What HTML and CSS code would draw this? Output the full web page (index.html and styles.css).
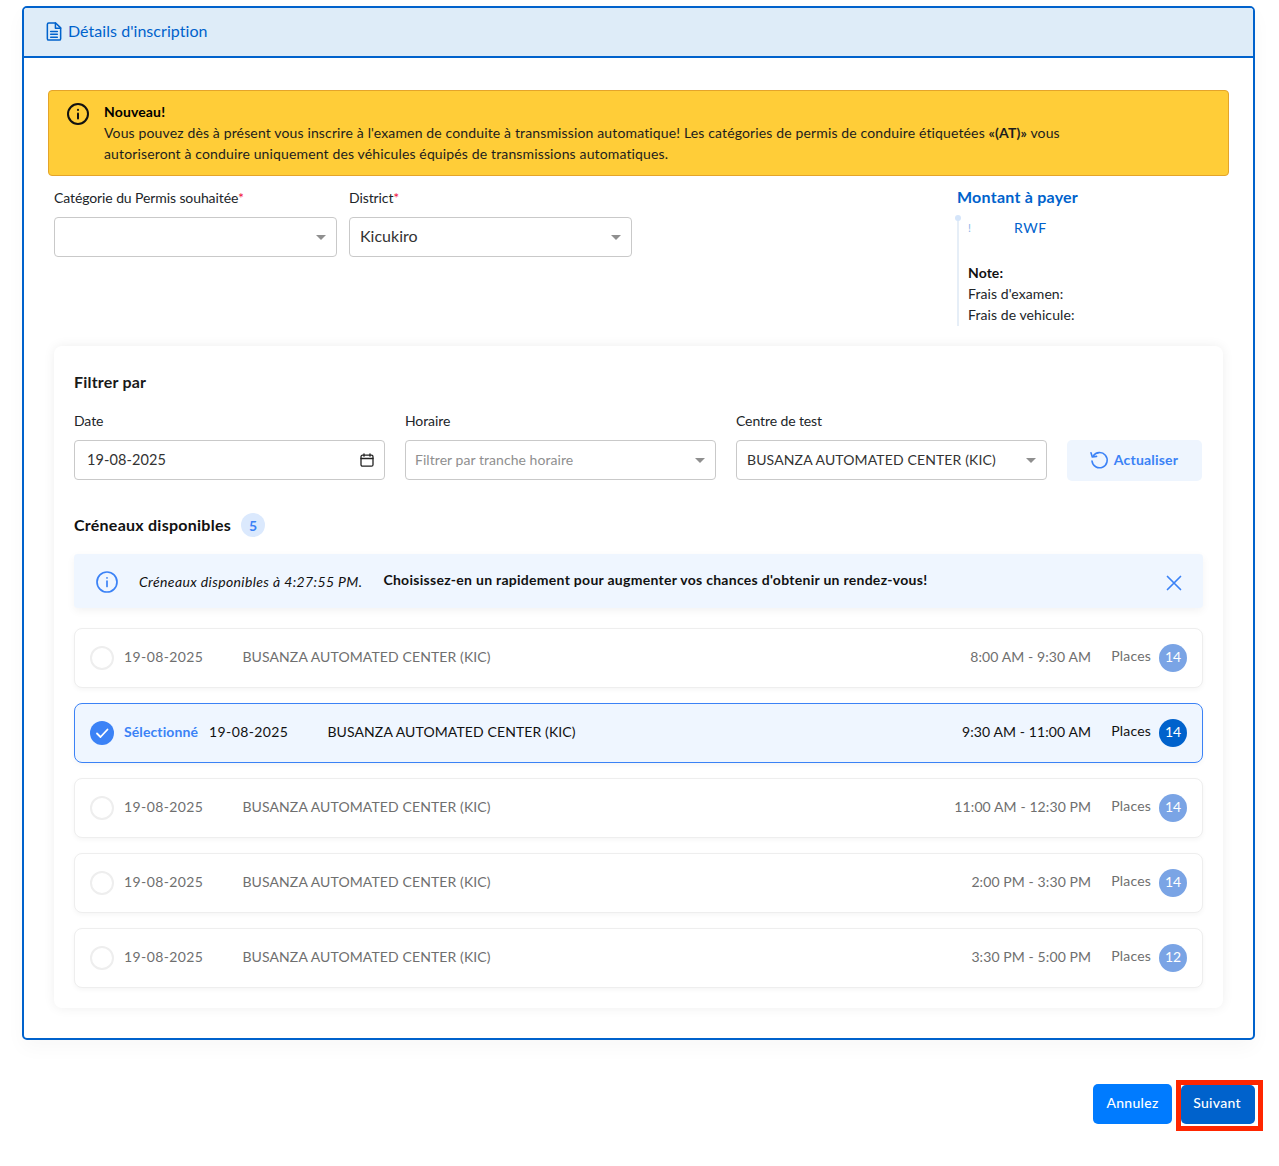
FILE: index.html
```html
<!DOCTYPE html>
<html lang="fr">
<head>
<meta charset="utf-8">
<title>Détails d'inscription</title>
<link rel="stylesheet" href="styles.css">
</head>
<body>
<div class="page">
  <section class="panel">
    <header class="panel-head">
      <svg class="doc-icon" viewBox="0 0 16 20" fill="none" stroke="currentColor" stroke-width="1.6" stroke-linejoin="round" stroke-linecap="round"><path d="M2.5 1h7.2L15 6.2v11.3a1.5 1.5 0 0 1-1.5 1.5h-11A1.5 1.5 0 0 1 1 17.500v-15A1.500 1.500 0 0 1 2.500 1z"/><path d="M9.500 1v5.500H15"/><path d="M4.500 10h7M4.500 13h7M4.500 16h7"/></svg>
      <span class="head-title">Détails d'inscription</span>
    </header>
    <div class="panel-body">
      <div class="notice">
        <svg class="notice-icon" viewBox="0 0 22 22" fill="none" stroke="#111" stroke-width="2" stroke-linecap="round"><circle cx="11" cy="11" r="10"/><path d="M11 10.500v5"/><path d="M11 6.800v.2"/></svg>
        <div class="notice-text">
          <strong>Nouveau!</strong><br>
          Vous pouvez dès à présent vous inscrire à l'examen de conduite à transmission automatique! Les catégories de permis de conduire étiquetées <b>«(AT)»</b> vous<br>autoriseront à conduire uniquement des véhicules équipés de transmissions automatiques.
        </div>
      </div>
      <div class="top-form">
        <div class="field cat-field">
          <label class="label">Catégorie du Permis souhaitée<span class="req">*</span></label>
          <div class="select tall"><span class="caret"></span></div>
        </div>
        <div class="field cat-field">
          <label class="label">District<span class="req">*</span></label>
          <div class="select tall"><span class="value-lg">Kicukiro</span><span class="caret"></span></div>
        </div>
        <aside class="amount">
          <h3 class="amount-title">Montant à payer</h3>
          <div class="timeline">
            <span class="dot"></span>
            <div class="amount-line"><span class="bang">!</span><span class="rwf">RWF</span></div>
            <div class="note"><strong>Note:</strong><br>Frais d'examen:<br>Frais de vehicule:</div>
          </div>
        </aside>
      </div>
      <div class="filter-card">
        <h4 class="filter-title">Filtrer par</h4>
        <div class="filter-row">
          <div class="field">
            <label class="label">Date</label>
            <div class="select"><span class="value">19-08-2025</span>
              <svg class="cal" viewBox="0 0 14 14" fill="none" stroke="#222" stroke-width="1.300" stroke-linecap="round"><rect x="1" y="2.200" width="12" height="11" rx="1.500"/><path d="M1 5.500h12M4 .8v2.400M10 .8v2.400"/></svg>
            </div>
          </div>
          <div class="field">
            <label class="label">Horaire</label>
            <div class="select"><span class="placeholder">Filtrer par tranche horaire</span><span class="caret"></span></div>
          </div>
          <div class="field">
            <label class="label">Centre de test</label>
            <div class="select"><span class="value small">BUSANZA AUTOMATED CENTER (KIC)</span><span class="caret"></span></div>
          </div>
          <button class="refresh" type="button">
            <svg viewBox="0 0 20 20" fill="none" stroke="currentColor" stroke-width="1.600" stroke-linecap="round" stroke-linejoin="round"><path d="M4.200 6A7.600 7.600 0 1 1 3 11"/><path d="M2 2.800 3.300 7l4.300-.6"/></svg>
            Actualiser
          </button>
        </div>
        <div class="slots-head">
          <h4 class="slots-title">Créneaux disponibles</h4>
          <span class="count">5</span>
        </div>
        <div class="info-bar">
          <svg class="info-icon" viewBox="0 0 22 22" fill="none" stroke="currentColor" stroke-width="1.700" stroke-linecap="round"><circle cx="11" cy="11" r="10"/><path d="M11 10v5.500"/><path d="M11 6.800v.2"/></svg>
          <em class="info-time">Créneaux disponibles à 4:27:55 PM.</em>
          <strong class="info-msg">Choisissez-en un rapidement pour augmenter vos chances d'obtenir un rendez-vous!</strong>
          <svg class="close" viewBox="0 0 16 16" fill="none" stroke="currentColor" stroke-width="1.700" stroke-linecap="round"><path d="M1.500 1.500l13 13M14.500 1.500l-13 13"/></svg>
        </div>
        <div class="slots">
          <div class="slot">
            <span class="radio"></span>
            <span class="date">19-08-2025</span>
            <span class="center">BUSANZA AUTOMATED CENTER (KIC)</span>
            <span class="time">8:00 AM - 9:30 AM</span>
            <span class="places">Places</span>
            <span class="seats">14</span>
          </div>
          <div class="slot selected">
            <span class="radio"><svg viewBox="0 0 24 24" fill="none" stroke="#fff" stroke-width="1.800" stroke-linecap="round" stroke-linejoin="round"><path d="M7 12.500l3.500 3.500L17.500 8.500"/></svg></span>
            <span class="picked">Sélectionné</span>
            <span class="date">19-08-2025</span>
            <span class="center">BUSANZA AUTOMATED CENTER (KIC)</span>
            <span class="time">9:30 AM - 11:00 AM</span>
            <span class="places">Places</span>
            <span class="seats">14</span>
          </div>
          <div class="slot">
            <span class="radio"></span>
            <span class="date">19-08-2025</span>
            <span class="center">BUSANZA AUTOMATED CENTER (KIC)</span>
            <span class="time">11:00 AM - 12:30 PM</span>
            <span class="places">Places</span>
            <span class="seats">14</span>
          </div>
          <div class="slot">
            <span class="radio"></span>
            <span class="date">19-08-2025</span>
            <span class="center">BUSANZA AUTOMATED CENTER (KIC)</span>
            <span class="time">2:00 PM - 3:30 PM</span>
            <span class="places">Places</span>
            <span class="seats">14</span>
          </div>
          <div class="slot">
            <span class="radio"></span>
            <span class="date">19-08-2025</span>
            <span class="center">BUSANZA AUTOMATED CENTER (KIC)</span>
            <span class="time">3:30 PM - 5:00 PM</span>
            <span class="places">Places</span>
            <span class="seats">12</span>
          </div>
        </div>
      </div>
    </div>
  </section>
  <footer class="actions">
    <button class="btn cancel" type="button">Annulez</button>
    <div class="next-wrap">
      <button class="btn next" type="button">Suivant</button>
      <span class="highlight"></span>
    </div>
  </footer>
</div>
</body>
</html>
```

FILE: styles.css
```css
* { box-sizing: border-box; }
html, body { margin: 0; padding: 0; background: #fff; }
body { font-family: "Lato", "Noto Sans", sans-serif; font-size: 14px; line-height: 21px; color: #212529; }
.page { padding: 6px 24px 0 22px; height: 1166px; overflow: hidden; }

.panel { border: 2px solid #0062cc; border-radius: 5px; height: 1034px; box-shadow: 0 8px 20px rgba(0,0,0,.03); }
.panel-head { height: 50px; display: flex; align-items: center; gap: 6px; padding: 0 22px; background: #deecf8; border-bottom: 2px solid #0062cc; border-radius: 3px 3px 0 0; color: #0062cc; font-size: 16px; letter-spacing: .05px; }
.head-title { padding-bottom: 4px; }
.doc-icon { width: 16px; height: 19px; margin-bottom: 2px; }
.panel-body { padding: 32px 24px 30px; }

.notice { display: flex; height: 86px; padding: 10px 18px; gap: 15px; background: #ffcd38; border: 1px solid #e4a42a; border-radius: 4px; color: #1d1d1d; letter-spacing: .14px; }
.notice-icon { width: 22px; height: 22px; flex: none; margin-top: 2px; }
.notice-text strong { color: #000; }

.top-form { display: flex; gap: 12px; padding: 11px 6px 0; height: 170px; position: relative; }
.cat-field { width: 283px; }
.field { display: flex; flex-direction: column; }
.label { display: block; height: 21px; margin-bottom: 9px; color: #212529; letter-spacing: -.1px; }
.req { color: #f0113f; }
.select { display: flex; align-items: center; justify-content: space-between; height: 40px; padding: 0 10px 0 10px; background: #fff; border: 1px solid #c9c9c9; border-radius: 4px; }
.caret { width: 0; height: 0; margin-left: auto; border-left: 5px solid transparent; border-right: 5px solid transparent; border-top: 5px solid #8f8f8f; }
.value-lg { font-size: 16px; color: #333; padding-bottom: 3px; }
.value { font-size: 14.500px; color: #333; letter-spacing: .1px; padding: 0 0 1px 2px; }
.value.small { font-size: 14px; padding: 0 0 2px; letter-spacing: .13px; }
.placeholder { font-size: 14px; color: #8f8f8f; letter-spacing: .05px; margin-left: -1px; padding-bottom: 2px; }
.cal { width: 14px; height: 14px; }

.amount { margin-left: auto; width: 272px; margin-right: -6px; margin-top: -1px; }
.amount-title { margin: 0 0 10px; font-size: 16px; line-height: 22px; font-weight: 700; color: #0062cc; letter-spacing: .24px; }
.timeline { position: relative; height: 108px; border-left: 2px solid #e6eef7; padding-left: 9px; margin-top: 0; }
.dot { position: absolute; left: -4px; top: -3px; width: 6px; height: 6px; border-radius: 50%; background: #d5e5fa; }
.amount-line { display: flex; height: 17px; line-height: 19px; color: #0062cc; }
.rwf { letter-spacing: .6px; }
.bang { width: 46px; color: #8fb6e8; font-size: 11px; }
.note { margin-top: 27px; color: #212529; letter-spacing: .08px; }
.note strong { color: #111; }

.filter-card { height: 662px; margin: 0 6px; padding: 25px 20px 20px; background: #fff; border-radius: 8px; box-shadow: 0 0 12px rgba(0,0,0,.07); }
.filter-title { margin: 0 0 17px; font-size: 16px; line-height: 22px; font-weight: 700; color: #1a1a1a; letter-spacing: .2px; }
.filter-row { display: grid; grid-template-columns: 311px 311px 311px 135px; column-gap: 20px; align-items: end; }
.filter-row .label { margin-bottom: 9px; }
.refresh { display: flex; align-items: center; justify-content: center; gap: 5px; height: 41px; margin-bottom: -1px; padding: 0 2px 2px 0; border: 0; border-radius: 5px; background: #eef5fe; color: #3b82f6; font: 700 14px/21px "Lato", sans-serif; letter-spacing: .2px; }
.refresh svg { width: 20px; height: 20px; }

.slots-head { display: flex; align-items: center; gap: 10px; margin-top: 33px; height: 24px; }
.slots-title { margin: 0 0 2px; font-size: 16px; font-weight: 700; color: #111; letter-spacing: .25px; }
.count { width: 24px; height: 24px; display: flex; align-items: center; justify-content: center; border-radius: 50%; background: #dbe9fd; color: #3b82f6; font-size: 14px; font-weight: 700; }

.info-bar { display: flex; align-items: center; height: 54px; margin-top: 17px; padding: 0 21px 0 22px; background: #eff6ff; border-radius: 4px; box-shadow: 0 3px 8px rgba(0,0,0,.05); color: #111; }
.info-icon { width: 22px; height: 22px; color: #3b82f6; margin-right: 21px; flex: none; margin-top: 2px; }
.info-time { margin-right: 21px; margin-top: 1px; letter-spacing: .38px; }
.info-msg { margin-top: -3px; letter-spacing: .28px; }
.close { width: 16px; height: 16px; margin-left: auto; color: #3b82f6; margin-top: 3px; }

.slots { display: flex; flex-direction: column; gap: 15px; margin-top: 20px; }
.slot { display: flex; align-items: center; height: 60px; padding: 0 15px; background: #fff; border: 1px solid #eee; border-radius: 8px; box-shadow: 0 2px 5px rgba(0,0,0,.04); color: #6f6f6f; }
.radio { width: 24px; height: 24px; flex: none; margin-right: 10px; border: 2px solid #eee; border-radius: 50%; }
.date { margin-right: 39px; letter-spacing: .4px; padding-bottom: 4px; }
.center { letter-spacing: .11px; padding-bottom: 4px; }
.time { margin-left: auto; margin-right: 20px; letter-spacing: .1px; padding-bottom: 4px; }
.places { margin-right: 8px; padding-bottom: 5px; letter-spacing: .2px; }
.seats { display: flex; align-items: center; justify-content: center; width: 28px; height: 28px; padding-bottom: 3px; border-radius: 50%; background: #7aa4e5; color: #fff; }
.slot.selected { background: #eff6ff; border-color: #3b82f6; color: #111; }
.slot.selected .radio { background: #3b82f6; border: 0; }
.radio svg { display: block; width: 24px; height: 24px; }
.picked { margin-right: 11px; color: #3b82f6; font-weight: 700; letter-spacing: .1px; padding-bottom: 4px; }
.slot.selected .seats { background: #0062cc; }

.actions { display: flex; justify-content: flex-end; align-items: flex-start; gap: 9px; margin-top: 44px; }
.btn { height: 40px; border: 0; border-radius: 5px; color: #fff; font: 500 14px/21px "Lato", sans-serif; letter-spacing: .3px; padding: 0 0 3px; }
.cancel { width: 79px; background: #007bff; }
.next-wrap { position: relative; display: flex; margin-top: 1px; }
.next { width: 74px; height: 39px; background: #0062cc; padding: 0 2px 5px 0; }
.highlight { position: absolute; left: -5px; top: -5px; width: 87px; height: 51px; border: 5px solid #ff2600; pointer-events: none; }
```
